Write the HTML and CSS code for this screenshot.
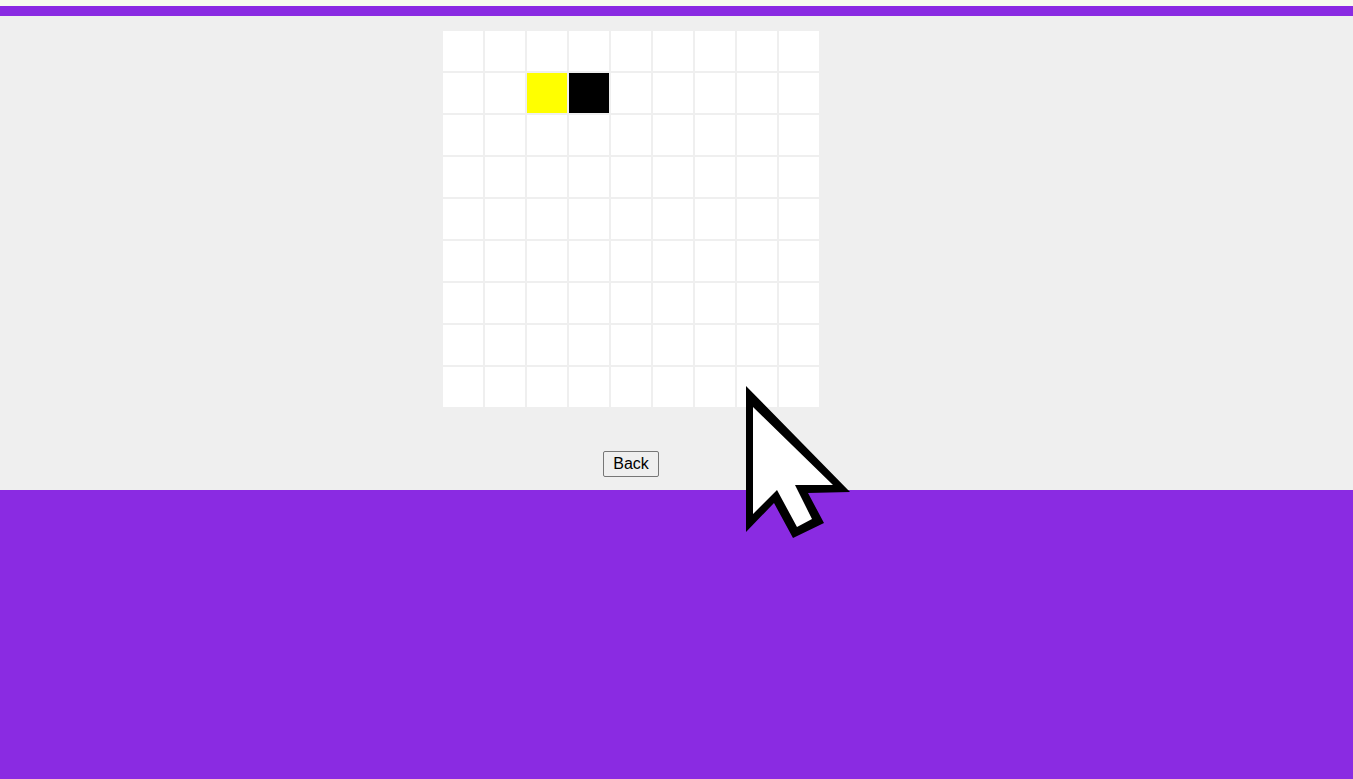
FILE: index.html
```html
<!DOCTYPE html>
<html>
<head>
<meta charset="utf-8">
<link rel="stylesheet" href="styles.css">
</head>
<body>
<div class="topstrip"></div>
<div class="topband"></div>
<main class="panel">
  <div class="inner">
    <div class="board">
      <div class="cell"></div><div class="cell"></div><div class="cell"></div><div class="cell"></div><div class="cell"></div><div class="cell"></div><div class="cell"></div><div class="cell"></div><div class="cell"></div>
      <div class="cell"></div><div class="cell"></div><div class="cell yellow"></div><div class="cell black"></div><div class="cell"></div><div class="cell"></div><div class="cell"></div><div class="cell"></div><div class="cell"></div>
      <div class="cell"></div><div class="cell"></div><div class="cell"></div><div class="cell"></div><div class="cell"></div><div class="cell"></div><div class="cell"></div><div class="cell"></div><div class="cell"></div>
      <div class="cell"></div><div class="cell"></div><div class="cell"></div><div class="cell"></div><div class="cell"></div><div class="cell"></div><div class="cell"></div><div class="cell"></div><div class="cell"></div>
      <div class="cell"></div><div class="cell"></div><div class="cell"></div><div class="cell"></div><div class="cell"></div><div class="cell"></div><div class="cell"></div><div class="cell"></div><div class="cell"></div>
      <div class="cell"></div><div class="cell"></div><div class="cell"></div><div class="cell"></div><div class="cell"></div><div class="cell"></div><div class="cell"></div><div class="cell"></div><div class="cell"></div>
      <div class="cell"></div><div class="cell"></div><div class="cell"></div><div class="cell"></div><div class="cell"></div><div class="cell"></div><div class="cell"></div><div class="cell"></div><div class="cell"></div>
      <div class="cell"></div><div class="cell"></div><div class="cell"></div><div class="cell"></div><div class="cell"></div><div class="cell"></div><div class="cell"></div><div class="cell"></div><div class="cell"></div>
      <div class="cell"></div><div class="cell"></div><div class="cell"></div><div class="cell"></div><div class="cell"></div><div class="cell"></div><div class="cell"></div><div class="cell"></div><div class="cell"></div>
    </div>
    <button class="back" type="button">Back</button>
  </div>
</main>
<svg class="cursor" width="120" height="170" viewBox="0 0 120 170" xmlns="http://www.w3.org/2000/svg">
  <polygon points="5,5 5,151 33,122 52,157 83,142 67,112 109,111" fill="#000"/>
  <polygon points="12,26 12,133 36,109 56,146 71,138 54,104 92,104" fill="#fff"/>
</svg>
</body>
</html>
```

FILE: styles.css
```css
html, body {
  margin: 0;
  padding: 0;
}
body {
  background: #8a2be2;
  min-height: 779px;
  font-family: "Liberation Sans", Arial, sans-serif;
  position: relative;
  overflow: hidden;
}
.topstrip {
  height: 6px;
  background: #f7fbef;
}
.topband {
  height: 10px;
  background: #8a2be2;
}
.panel {
  background: #efefef;
  height: 474px;
  display: flex;
}
.inner {
  width: 1262px;
  display: flex;
  flex-direction: column;
  align-items: center;
  padding-top: 15px;
}
.board {
  display: grid;
  grid-template-columns: repeat(9, 40px);
  grid-auto-rows: 40px;
  gap: 2px;
}
.cell {
  background: #ffffff;
}
.cell.yellow {
  background: #ffff00;
}
.cell.black {
  background: #000000;
}
.back {
  margin-top: 44px;
  font-family: "Liberation Sans", Arial, sans-serif;
  font-size: 16px;
  height: 26px;
  width: 56px;
  padding: 0;
  background: #efefef;
  color: #000;
  border: 1px solid #767676;
  border-radius: 2px;
}
.cursor {
  position: absolute;
  left: 741px;
  top: 381px;
}
```
